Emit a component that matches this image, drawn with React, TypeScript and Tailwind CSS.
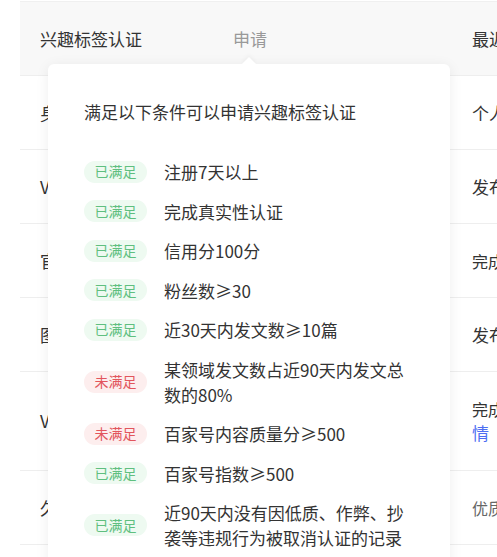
import React from "react"

const font = { fontFamily: '"Microsoft YaHei", "Noto Sans CJK SC", "Noto Sans", sans-serif' }

type Item = { ok: boolean; text: string }

const items: Item[] = [
  { ok: true, text: "注册7天以上" },
  { ok: true, text: "完成真实性认证" },
  { ok: true, text: "信用分100分" },
  { ok: true, text: "粉丝数≥30" },
  { ok: true, text: "近30天内发文数≥10篇" },
  { ok: false, text: "某领域发文数占近90天内发文总数的80%" },
  { ok: false, text: "百家号内容质量分≥500" },
  { ok: true, text: "百家号指数≥500" },
  { ok: true, text: "近90天内没有因低质、作弊、抄袭等违规行为被取消认证的记录" },
]

function Badge({ ok }: { ok: boolean }) {
  return (
    <span
      className={
        ok
          ? "flex h-[22px] w-[63px] shrink-0 items-center justify-center rounded-full bg-[#eefaf1] text-[14px] text-[#5fbf7f]"
          : "flex h-[22px] w-[63px] shrink-0 items-center justify-center rounded-full bg-[#fdeeee] text-[14px] text-[#e2555c]"
      }
    >
      {ok ? "已满足" : "未满足"}
    </span>
  )
}

function Row({
  name,
  desc,
  tall,
}: {
  name: string
  desc: React.ReactNode
  tall?: boolean
}) {
  return (
    <div
      className={
        tall
          ? "flex h-[99px] items-center border-b border-[#eeeeee] pl-[20px]"
          : "flex h-[74px] items-center border-b border-[#eeeeee] pl-[20px]"
      }
    >
      <div className="w-[193px] shrink-0 text-[17px] text-[#333]">{name}</div>
      <div className="w-[239px] shrink-0 text-[17px] text-[#999]" />
      <div className="flex-1 whitespace-nowrap">{desc}</div>
    </div>
  )
}

export default function App() {
  return (
    <div className="relative h-[557px] w-[497px] overflow-hidden bg-white" style={font}>
      <div className="ml-[20px] mt-px w-[600px] border-t border-[#f0f0f0]">
        <div className="flex h-[74px] items-center border-b border-[#eeeeee] bg-[#f8f8f8] pl-[20px]">
          <div className="w-[193px] shrink-0 text-[17px] text-[#333]">兴趣标签认证</div>
          <div className="w-[239px] shrink-0 text-[17px] text-[#999]">申请</div>
          <div className="flex-1 whitespace-nowrap text-[17px] text-[#333]">最近认证时间</div>
        </div>
        <Row name="身份认证" desc={<span className="text-[17px] text-[#333]">个人身份认证</span>} />
        <Row name="V认证" desc={<span className="text-[17px] text-[#333]">发布优质内容</span>} />
        <Row name="官方认证" desc={<span className="text-[16px] text-[#333]">完成官方认证</span>} />
        <Row name="图文原创" desc={<span className="text-[17px] text-[#333]">发布原创内容</span>} />
        <Row
          tall
          name="V+认证"
          desc={
            <div className="text-[16px] leading-[24px] text-[#333]">
              <div>完成企业认证，查看详</div>
              <div className="text-[17px] text-[#4e6ef2]">情</div>
            </div>
          }
        />
        <Row name="久经认证" desc={<span className="text-[16px] text-[#666]">优质作者</span>} />
      </div>

      <div className="absolute left-[48px] top-[64px] w-[402px] rounded-[6px] bg-white px-[36px] pb-[36px] pt-[35px] shadow-[0_2px_14px_rgba(0,0,0,0.07)]">
        <div className="absolute left-[196px] top-[-5px] h-[10px] w-[10px] rotate-45 bg-white shadow-[-2px_-2px_4px_rgba(0,0,0,0.03)]" />
        <div className="text-[17px] leading-[25px] text-[#333]">满足以下条件可以申请兴趣标签认证</div>
        <div className="mt-[35px] flex flex-col gap-[14.5px]">
          {items.map((it, i) => (
            <div key={i} className="flex items-center gap-[17px]">
              <Badge ok={it.ok} />
              <div className="w-[250px] text-[17px] leading-[25px] text-[#333]">{it.text}</div>
            </div>
          ))}
        </div>
      </div>
    </div>
  )
}
